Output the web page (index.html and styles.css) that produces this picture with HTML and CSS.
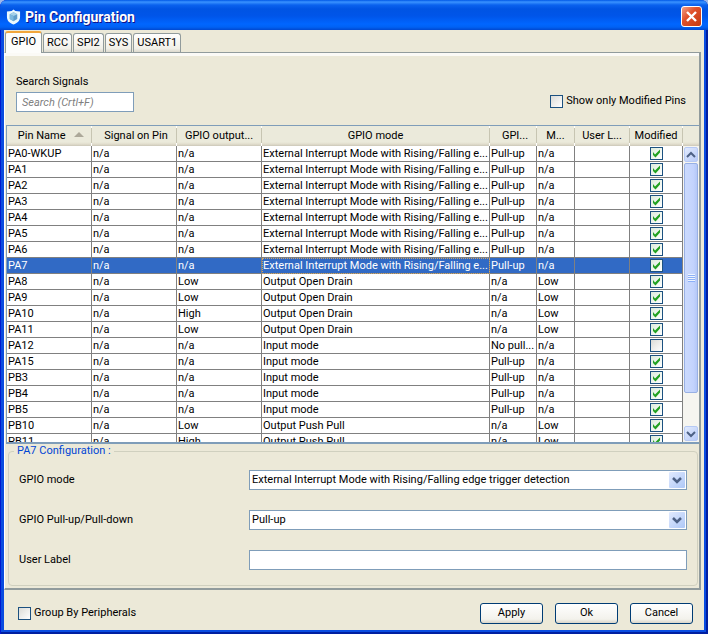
FILE: index.html
```html
<!DOCTYPE html>
<html lang="en">
<head>
  <meta charset="UTF-8" />
  <meta name="viewport" content="width=device-width, initial-scale=1.0" />
  <title>Pin Configuration</title>
  <link rel="stylesheet" href="styles.css">
</head>
<body>
  <div class="window">
    <header class="titlebar">
      <svg class="app-icon" viewBox="0 0 16 16" aria-hidden="true">
        <path d="M8 0 L10 1.5 L15 2 V8 C15 12 12 14.500 8 16 C4 14.500 1 12 1 8 V2 L6 1.500 Z" fill="#eaf8fd" />
        <path d="M8 3 L12 5 V10 L8 12.500 L4 10 V5 Z" fill="#5d9ccb" />
        <path d="M8 3 L12 5 L8 7 L4 5 Z" fill="#a5d2ea" />
        <path d="M8 7 V12.500 L4 10 V5 Z" fill="#7db9de" />
      </svg>
      <h1 class="title">Pin Configuration</h1>
      <button type="button" class="close" aria-label="Close">
        <svg viewBox="0 0 19 19"><path d="M5 5 L14 14 M14 5 L5 14" stroke="#fff" stroke-width="2.400" /></svg>
      </button>
    </header>

    <main class="content">
      <nav class="tabs" role="tablist">
        <button type="button" role="tab" class="tab active" aria-selected="true">GPIO</button>
        <button type="button" role="tab" class="tab">RCC</button>
        <button type="button" role="tab" class="tab">SPI2</button>
        <button type="button" role="tab" class="tab">SYS</button>
        <button type="button" role="tab" class="tab">USART1</button>
      </nav>

      <section class="panel">
        <div class="toolbar">
          <div class="search">
            <label for="search">Search Signals</label>
            <input type="text" id="search" placeholder="Search (Crtl+F)" />
          </div>
          <label class="check"><input type="checkbox" id="onlyModified" />Show only Modified Pins</label>
        </div>

        <div class="grid">
          <div class="grid-body">
            <table class="pins">
              <colgroup>
                <col class="c-name"><col class="c-signal"><col class="c-output"><col class="c-mode">
                <col class="c-pull"><col class="c-speed"><col class="c-user"><col class="c-modified">
              </colgroup>
              <thead>
                <tr>
                  <th class="indent">Pin Name <svg class="sort" viewBox="0 0 10 5" aria-hidden="true"><path d="M0 5 L5 0 L10 5 Z" fill="#aca899" /></svg></th>
                  <th class="indent">Signal on Pin</th>
                  <th>GPIO output...</th>
                  <th>GPIO mode</th>
                  <th class="indent">GPI...</th>
                  <th>M...</th>
                  <th>User L...</th>
                  <th>Modified</th>
                </tr>
              </thead>
              <tbody id="rows"></tbody>
            </table>
          </div>
          <div class="scroll">
            <div class="scroll-corner"></div>
            <div class="scroll-track">
              <button type="button" class="scroll-btn" aria-label="Scroll up">
                <svg viewBox="0 0 10 8"><path d="M1 6 L5 2 L9 6" /></svg>
              </button>
              <div class="scroll-thumb"><span class="grip"></span></div>
              <button type="button" class="scroll-btn" aria-label="Scroll down">
                <svg viewBox="0 0 10 8"><path d="M1 2 L5 6 L9 2" /></svg>
              </button>
            </div>
          </div>
        </div>

        <fieldset class="config">
          <legend>PA7 Configuration :</legend>
          <label for="mode">GPIO mode</label>
          <select id="mode">
            <option>External Interrupt Mode with Rising/Falling edge trigger detection</option>
          </select>
          <label for="pull">GPIO Pull-up/Pull-down</label>
          <select id="pull">
            <option>Pull-up</option>
          </select>
          <label for="userLabel">User Label</label>
          <input type="text" id="userLabel" />
        </fieldset>
      </section>

      <footer class="footer">
        <label class="check"><input type="checkbox" id="group" />Group By Peripherals</label>
        <div class="buttons">
          <button type="button" class="btn">Apply</button>
          <button type="button" class="btn">Ok</button>
          <button type="button" class="btn">Cancel</button>
        </div>
      </footer>
    </main>
  </div>

  <script>
    const exti = "External Interrupt Mode with Rising/Falling e...";

    // name, output level, mode, pull, speed, modified
    const pins = [
      ["PA0-WKUP", "n/a", exti, "Pull-up", "n/a", true],
      ["PA1", "n/a", exti, "Pull-up", "n/a", true],
      ["PA2", "n/a", exti, "Pull-up", "n/a", true],
      ["PA3", "n/a", exti, "Pull-up", "n/a", true],
      ["PA4", "n/a", exti, "Pull-up", "n/a", true],
      ["PA5", "n/a", exti, "Pull-up", "n/a", true],
      ["PA6", "n/a", exti, "Pull-up", "n/a", true],
      ["PA7", "n/a", exti, "Pull-up", "n/a", true],
      ["PA8", "Low", "Output Open Drain", "n/a", "Low", true],
      ["PA9", "Low", "Output Open Drain", "n/a", "Low", true],
      ["PA10", "High", "Output Open Drain", "n/a", "Low", true],
      ["PA11", "Low", "Output Open Drain", "n/a", "Low", true],
      ["PA12", "n/a", "Input mode", "No pull...", "n/a", false],
      ["PA15", "n/a", "Input mode", "Pull-up", "n/a", true],
      ["PB3", "n/a", "Input mode", "Pull-up", "n/a", true],
      ["PB4", "n/a", "Input mode", "Pull-up", "n/a", true],
      ["PB5", "n/a", "Input mode", "Pull-up", "n/a", true],
      ["PB10", "Low", "Output Push Pull", "n/a", "Low", true],
      ["PB11", "High", "Output Push Pull", "n/a", "Low", true]
    ];
    const selected = "PA7";

    document.getElementById("rows").innerHTML = pins.map(([name, level, mode, pull, speed, modified]) => `
      <tr class="${name === selected ? "selected" : ""}">
        <td>${name}</td><td>n/a</td><td>${level}</td><td class="mode">${mode}</td>
        <td>${pull}</td><td>${speed}</td><td></td>
        <td class="tick"><input type="checkbox" aria-label="${name} modified" ${modified ? "checked" : ""} /></td>
      </tr>`).join("");
  </script>
</body>
</html>
```

FILE: styles.css
```css
* { box-sizing: border-box; }
body { margin: 0; background: #9db8ea; color: #000; font: 11px/14px Tahoma, Roboto, sans-serif; }
button, input, select { font: inherit; color: inherit; margin: 0; }
button { padding: 0; }

.window { display: flex; flex-direction: column; height: 100vh; padding: 0 4px 4px; background: #0a4ce0; border-radius: 7px 7px 0 0; box-shadow: inset 1px 0 #0019cf, inset -2px -2px #001ea0; overflow: hidden; }

.titlebar { display: flex; align-items: center; flex: none; gap: 4px; height: 30px; margin: 0 -4px; padding: 3px 6px 0 6px; background: linear-gradient(#0058e6 0, #3a93ff 2px, #0a62ee 5px, #0054e3 9px, #0055e9 16px, #0066ff 24px, #0062f5 27px, #0048d0 30px); }
.app-icon { width: 15px; height: 16px; }
.title { flex: 1; margin: 0; color: #fff; font-size: 14px; font-weight: bold; line-height: 16px; text-shadow: 1px 1px #0f1089; }
.close { width: 21px; height: 21px; border: 1px solid #fff; border-radius: 3px; background: linear-gradient(135deg, #f0a088, #e0512b 40%, #c33a12); }
.close svg { display: block; width: 19px; height: 19px; fill: none; }

.content { display: flex; flex-direction: column; flex: 1; min-height: 0; background: #ece9d8; }

.tabs { display: flex; align-items: flex-end; flex: none; gap: 1px; height: 22px; padding-left: 1px; }
.tab { height: 19px; padding: 0 3px; border: 1px solid #919b9c; border-bottom: 0; border-radius: 3px 3px 0 0; background: linear-gradient(#fff, #f1f0e8 80%, #dcd9cd); }
.tab.active { position: relative; height: 22px; padding: 0 5px 2px; margin-bottom: -1px; border-top: 2px solid #f2a63b; background: #fdfdfb; }

.panel { display: flex; flex-direction: column; flex: 1; min-height: 0; margin-right: 3px; border: 1px solid #919b9c; border-left-color: #fff; border-width: 1px 2px 2px 1px; box-shadow: inset 0 3px #fbfaf6; }

.toolbar { display: flex; justify-content: space-between; align-items: flex-end; flex: none; height: 72px; padding: 0 13px 13px 11px; }
.search { display: flex; flex-direction: column; gap: 3px; }
.search input { width: 118px; height: 20px; padding: 0 5px; border: 1px solid #7f9db9; background: #fff; }
.search input::placeholder { color: #808080; font-style: italic; opacity: 1; }

.check { display: flex; align-items: center; gap: 3px; }
input[type="checkbox"] { appearance: none; flex: none; width: 13px; height: 13px; border: 1px solid #1c5180; background: linear-gradient(135deg, #dcdcd7, #fff); }
input[type="checkbox"]:checked { background: url("data:image/svg+xml,%3Csvg xmlns='http://www.w3.org/2000/svg' viewBox='0 0 11 11'%3E%3Cpath d='M2 4v3l2.500 2.500L9 4.500v-3L4 6.500z' fill='%2321a121'/%3E%3C/svg%3E") center / 11px 11px, linear-gradient(135deg, #dcebdc, #fff); }
.toolbar .check { margin-bottom: 4px; }

.grid { display: flex; flex: 1; min-height: 0; margin-left: 1px; border: 1px solid #7f9db9; border-right: 0; border-bottom-width: 2px; background: #fff; overflow: hidden; }
.grid-body { flex: 1; min-width: 0; overflow: hidden; }
.pins { width: 100%; table-layout: fixed; border-collapse: separate; border-spacing: 0; }
.c-name, .c-signal, .c-output { width: 85px; }
.c-pull { width: 47px; }
.c-speed { width: 38px; }
.c-user { width: 55px; }
.c-modified { width: 53px; }
.pins th, .pins td { white-space: nowrap; }
.pins th, .scroll-corner { height: 20px; background: linear-gradient(#ebeadb 80%, #e2dece 90%, #cbc7b8) no-repeat; }
.pins th { padding: 0 1px; border-right: 1px solid #c7c5b2; border-image: linear-gradient(transparent 15%, #c7c5b2 15% 80%, transparent 80%) 1; font-weight: normal; text-align: center; }
.pins th.indent { padding-left: 5px; }
.sort { width: 10px; height: 5px; margin-left: 6px; vertical-align: 2px; }
.pins td { height: 16px; padding: 0 1px; border-right: 1px solid #808080; border-bottom: 1px solid #808080; line-height: 15px; }
.pins td.tick { line-height: 0; text-align: center; }
.pins .selected td { background: #316ac5; color: #fff; }
.pins .selected .mode { outline: 1px dotted #c9a36b; outline-offset: -1px; }

.scroll { display: flex; flex-direction: column; flex: none; width: 16px; }
.scroll-track { display: flex; flex-direction: column; flex: 1; min-height: 0; padding: 1px; background: #f6f5f0; }
.scroll-btn { display: flex; align-items: center; justify-content: center; flex: none; height: 15px; border: 1px solid #b7caf5; border-radius: 2px; background: linear-gradient(135deg, #e1eafe, #b9cbf7); }
.scroll-btn svg { width: 10px; height: 8px; fill: none; stroke: #4d6185; stroke-width: 2; }
.scroll-thumb { display: flex; align-items: center; justify-content: center; height: 230px; margin: 1px 0 auto; border: 1px solid #98b0e4; border-radius: 2px; background: linear-gradient(90deg, #cbdafd, #c3d3fd 70%, #b5c8f7); }
.grip { width: 7px; height: 8px; background: repeating-linear-gradient(#eef4fe 0 1px, #8cb0f8 1px 2px); }

.config { display: grid; grid-template-columns: 230px 1fr; align-items: center; row-gap: 20px; flex: none; height: 142px; margin: 0 1px 2px 3px; padding: 12px 10px 14px 10px; border: 1px solid #d0d0bf; border-radius: 4px; }
.config legend { margin-left: -5px; padding: 0 3px; color: #0046d5; }
.config select, .config input { width: 100%; height: 20px; padding: 0 2px; border: 1px solid #7f9db9; border-radius: 0; background: #fff; }
.config select { appearance: none; background: url("data:image/svg+xml,%3Csvg xmlns='http://www.w3.org/2000/svg' viewBox='0 0 16 16'%3E%3ClinearGradient id='g' x2='1' y2='1'%3E%3Cstop stop-color='%23e1eafe'/%3E%3Cstop offset='1' stop-color='%23aec8f7'/%3E%3C/linearGradient%3E%3Crect width='16' height='16' rx='1' fill='url(%23g)'/%3E%3Cpath d='M4 6l4 4 4-4' fill='none' stroke='%234d6185' stroke-width='2.500'/%3E%3C/svg%3E") no-repeat right 1px center / 16px 16px #fff; }

.footer { display: flex; align-items: center; justify-content: space-between; flex: none; height: 40px; padding: 6px 11px 0 14px; }
.buttons { display: flex; gap: 12px; }
.btn { width: 63px; height: 21px; border: 1px solid #003c74; border-radius: 3px; background: linear-gradient(#fff, #f3f2ec 80%, #d9d5c9); }
```
